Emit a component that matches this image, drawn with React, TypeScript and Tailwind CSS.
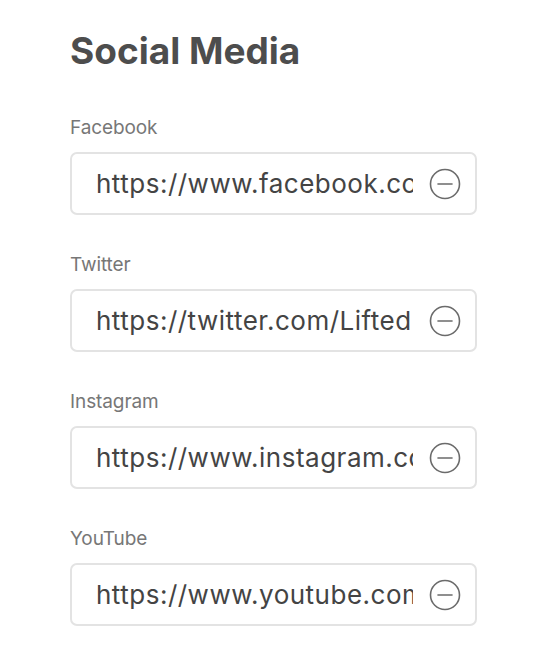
import React from "react";

const items = [
  { label: "Facebook", value: "https://www.facebook.com/LiftedLogic" },
  { label: "Twitter", value: "https://twitter.com/LiftedLogic" },
  { label: "Instagram", value: "https://www.instagram.com/liftedlogic" },
  { label: "YouTube", value: "https://www.youtube.com/c/LiftedLogic" },
];

function MinusCircle() {
  return (
    <svg width="32" height="32" viewBox="0 0 32 32" fill="none">
      <circle cx="16" cy="16" r="14.5" stroke="#6b6b6b" strokeWidth="1.6" />
      <path d="M9 16h14" stroke="#6b6b6b" strokeWidth="1.6" strokeLinecap="round" />
    </svg>
  );
}

export default function App() {
  return (
    <div
      className="w-[534px] h-[648px] bg-white pl-[70px] pt-[28px]"
      style={{ fontFamily: "Inter, 'Noto Sans', sans-serif" }}
    >
      <h1 className="text-[37px] leading-[46px] font-bold text-[#4d4d4d] tracking-[0px]">
        Social Media
      </h1>
      <div className="mt-[42px] flex flex-col gap-[38px]">
        {items.map((it) => (
          <div key={it.label} className="flex flex-col">
            <label className="text-[19px] leading-[24px] text-[#777] tracking-[-0.1px]">
              {it.label}
            </label>
            <div className="mt-[12px] w-[407px] h-[63px] border-2 border-[#e3e3e3] rounded-[7px] flex items-center pl-[24px] pr-[14px]">
              <input
                readOnly
                value={it.value}
                className="flex-1 min-w-0 bg-transparent outline-none text-[26px] text-[#444] tracking-[0.5px]"
                style={{ fontFamily: "Inter, 'Noto Sans', sans-serif" }}
              />
              <div className="ml-[16px] shrink-0 flex items-center">
                <MinusCircle />
              </div>
            </div>
          </div>
        ))}
      </div>
    </div>
  );
}
